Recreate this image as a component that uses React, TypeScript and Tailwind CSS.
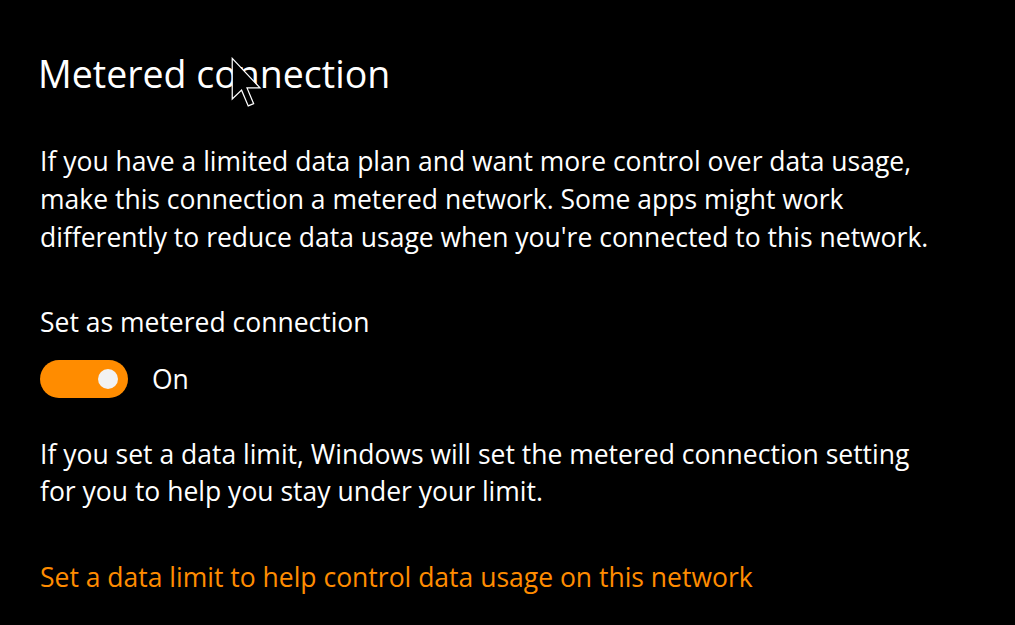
import React from 'react';

const font = { fontFamily: '"Open Sans", "Noto Sans", sans-serif' };

export default function App() {
  return (
    <div className="relative w-[1015px] h-[625px] bg-black text-white overflow-hidden" style={font}>
      <div className="flex flex-col pl-[40px] pt-[49px] whitespace-nowrap">
        <h1 className="text-[37.5px] leading-[50px] -ml-[2px] font-normal">Metered connection</h1>

        <p className="mt-[43px] text-[26.5px] leading-[38px]">
          If you have a limited data plan and want more control over data usage,
          <br />
          make this connection a metered network. Some apps might work
          <br />
          differently to reduce data usage when you're connected to this network.
        </p>

        <div className="mt-[47px] text-[26.5px] leading-[38px]">Set as metered connection</div>

        <div className="mt-[19px] flex items-center gap-[24px]">
          <div className="w-[88px] h-[38px] rounded-full bg-[#ff8c00] flex items-center justify-end pr-[10px]">
            <div className="w-[20px] h-[20px] rounded-full bg-[#f2f2f2]" />
          </div>
          <span className="text-[26.5px] leading-[38px]">On</span>
        </div>

        <p className="mt-[38px] text-[26.5px] leading-[37px]">
          If you set a data limit, Windows will set the metered connection setting
          <br />
          for you to help you stay under your limit.
        </p>

        <a className="mt-[48px] text-[26.5px] leading-[38px] text-[#ff8c00]">
          Set a data limit to help control data usage on this network
        </a>
      </div>

      {/* mouse pointer */}
      <svg className="absolute left-[231px] top-[57px]" width="32" height="52" viewBox="0 0 13 21">
        <path d="M0.5 0.5 L0.5 17 L4.3 13.4 L7 19.8 L9.2 18.9 L6.5 12.5 L11.8 12.5 Z" fill="black" stroke="white" strokeWidth="0.5" strokeLinejoin="miter" />
      </svg>
    </div>
  );
}
